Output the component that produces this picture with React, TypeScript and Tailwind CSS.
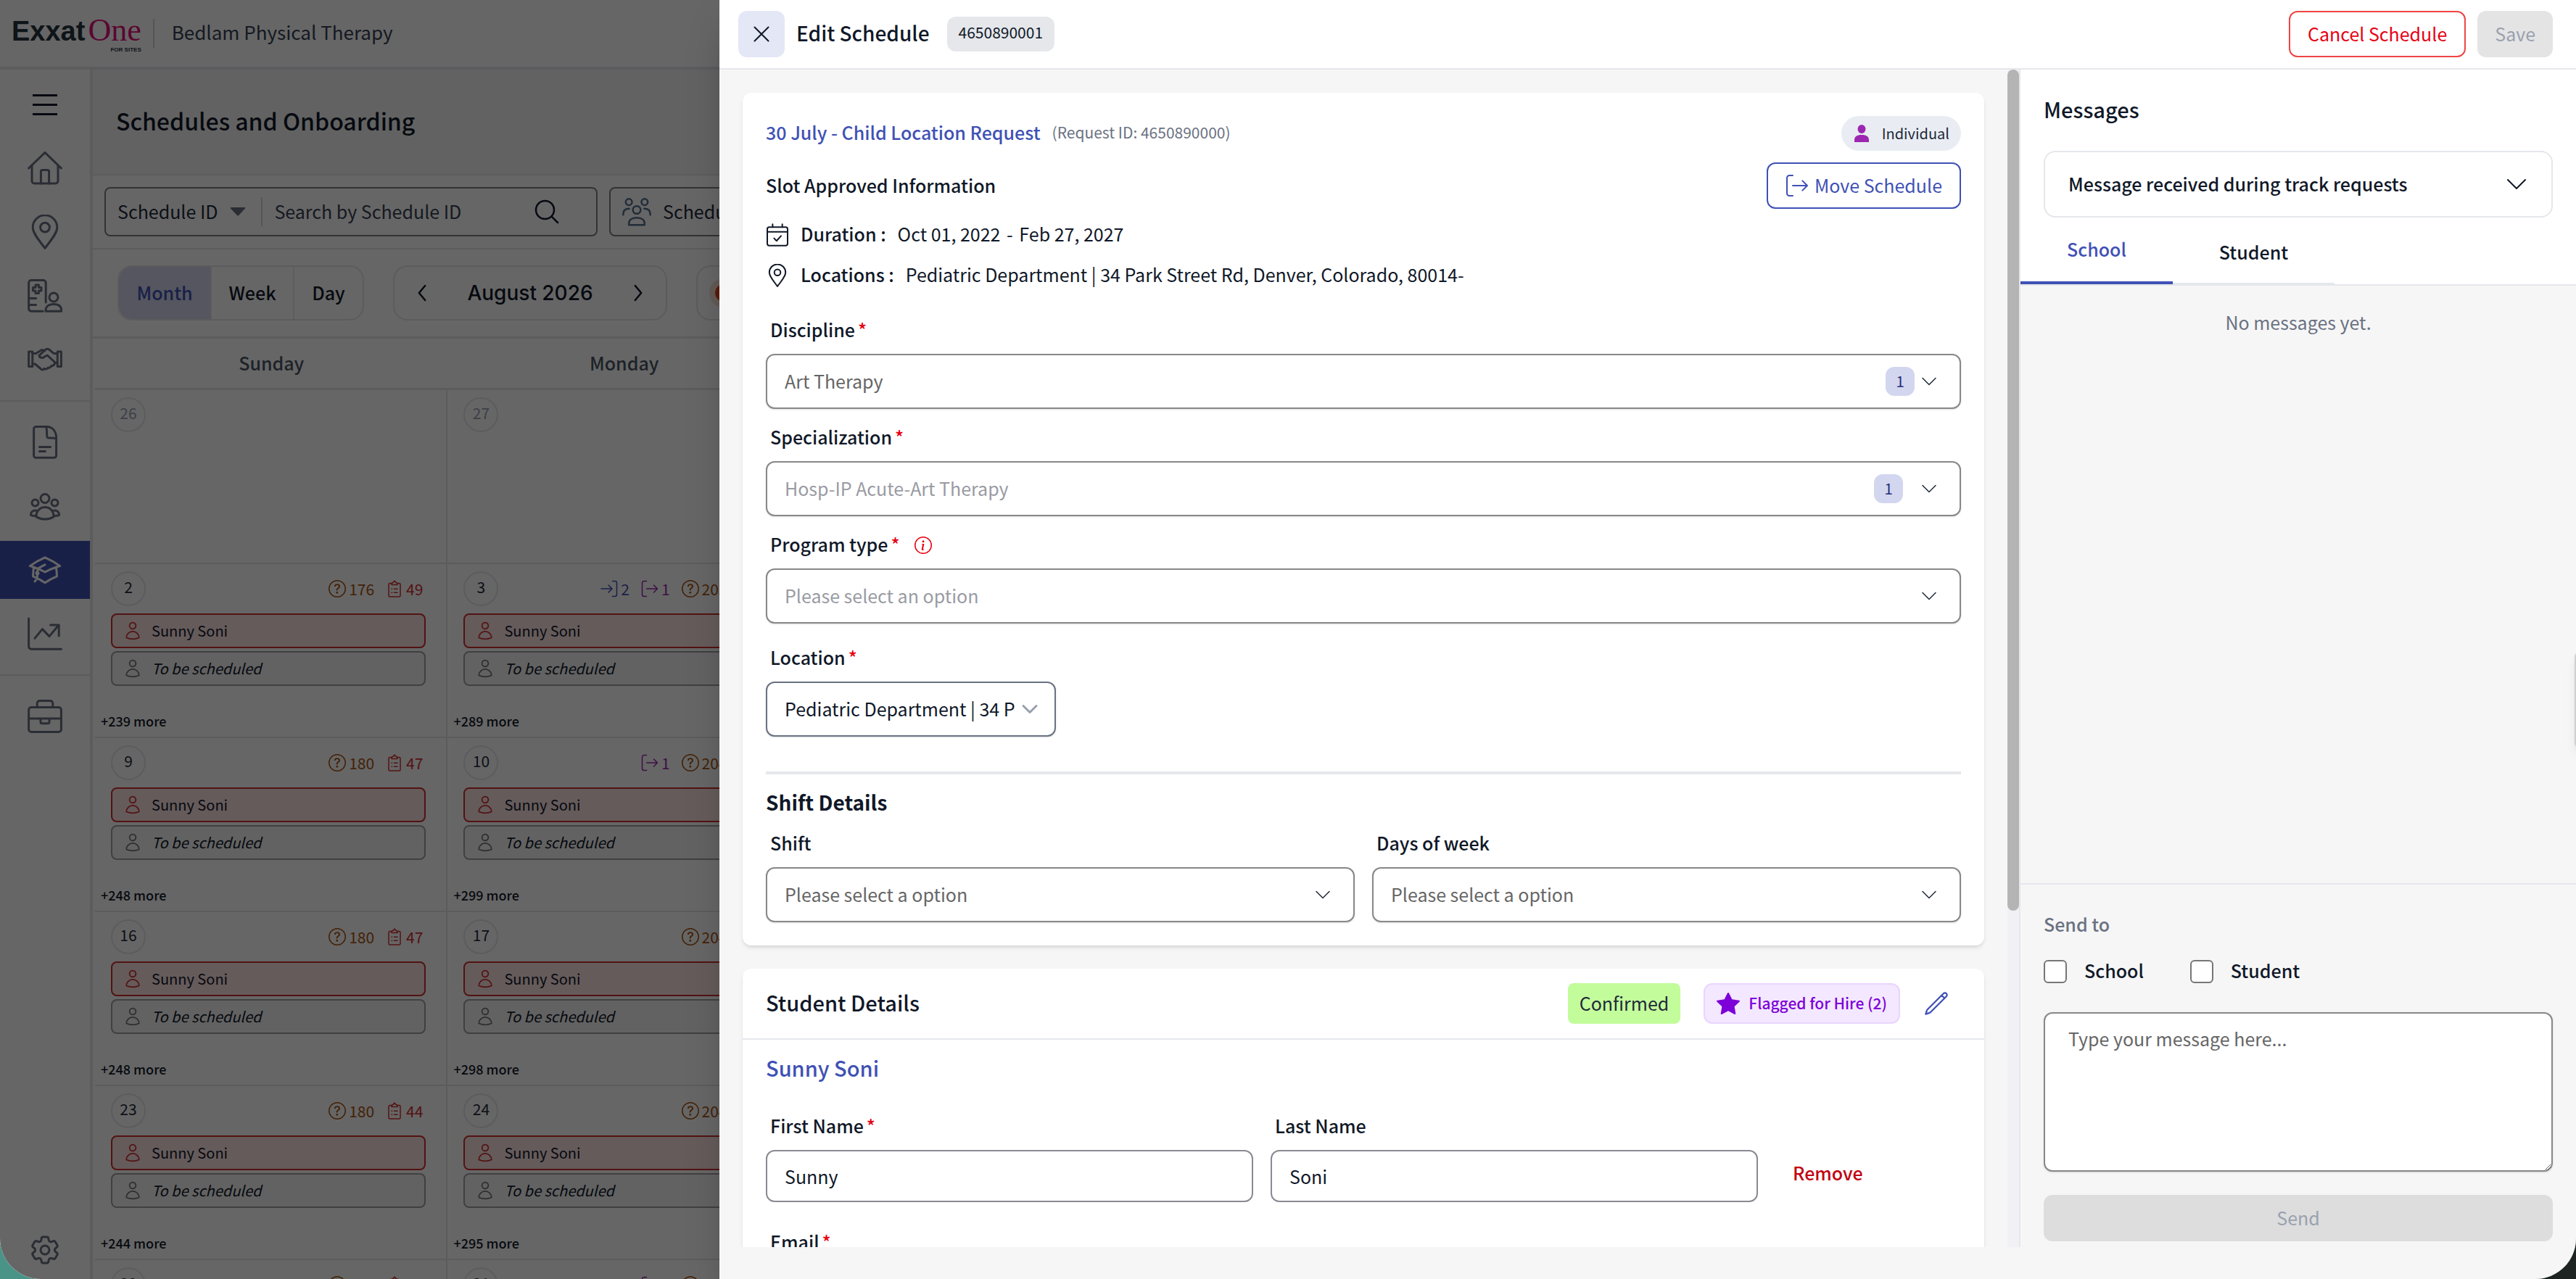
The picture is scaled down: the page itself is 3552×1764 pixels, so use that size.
import { useState } from "react";
import {
  HiOutlineAcademicCap,
  HiOutlineCog6Tooth,
  HiOutlineMagnifyingGlass,
  HiOutlinePencil,
  HiOutlineUser,
  HiOutlineUserGroup,
} from "react-icons/hi2";
import { BsChevronDown, BsInfoCircle, BsQuestionCircle, BsStarFill } from "react-icons/bs";

interface DayStats {
  moveIn?: number;
  moveOut?: number;
  pending: number;
  tasks?: number;
}

interface Day {
  date: number;
  muted?: boolean;
  more?: number;
  stats?: DayStats;
}

const WEEKS: Day[][] = [
  [{ date: 26, muted: true }, { date: 27, muted: true }],
  [
    { date: 2, more: 239, stats: { pending: 176, tasks: 49 } },
    { date: 3, more: 289, stats: { moveIn: 2, moveOut: 1, pending: 203, tasks: 52 } },
  ],
  [
    { date: 9, more: 248, stats: { pending: 180, tasks: 47 } },
    { date: 10, more: 299, stats: { moveOut: 1, pending: 204, tasks: 52 } },
  ],
  [
    { date: 16, more: 248, stats: { pending: 180, tasks: 47 } },
    { date: 17, more: 298, stats: { pending: 204, tasks: 52 } },
  ],
  [
    { date: 23, more: 244, stats: { pending: 180, tasks: 44 } },
    { date: 24, more: 295, stats: { pending: 204, tasks: 52 } },
  ],
  [
    { date: 30, more: 240, stats: { pending: 180, tasks: 44 } },
    { date: 31, more: 290, stats: { moveOut: 1, pending: 204, tasks: 52 } },
  ],
];

/* ---------- icons ---------- */

interface IconProps {
  className?: string;
  children?: React.ReactNode;
}

function Icon({ className, children }: IconProps) {
  return (
    <svg
      viewBox="0 0 24 24"
      fill="none"
      stroke="currentColor"
      strokeWidth="1.5"
      strokeLinecap="round"
      strokeLinejoin="round"
      aria-hidden="true"
      className={className}
    >
      {children}
    </svg>
  );
}

function HomeIcon({ className }: IconProps) {
  return (
    <Icon className={className}>
      <path d="M0.8 12 12 1.2 23.2 12" />
      <path d="M3 10v10.8a1.7 1.7 0 0 0 1.7 1.7h14.6a1.7 1.7 0 0 0 1.7-1.7V10" />
      <path d="M9.2 22.5v-8.2a1 1 0 0 1 1-1h3.6a1 1 0 0 1 1 1v8.2" />
    </Icon>
  );
}

function PinIcon({ className }: IconProps) {
  return (
    <Icon className={className}>
      <path d="M12 23.2C8.600 18.400 3.600 13.200 3.600 8.800a8.400 8.400 0 0 1 16.800 0c0 4.400-5 9.600-8.400 14.400Z" />
      <circle cx="12" cy="8.800" r="3.200" />
    </Icon>
  );
}

function ClinicIcon({ className }: IconProps) {
  return (
    <Icon className={className}>
      <path d="M12.600 16.500V3A1.800 1.800 0 0 0 10.800 1.200H2.600A1.800 1.800 0 0 0 .8 3v17.800a1.800 1.800 0 0 0 1.800 1.800h8M.8 13.800h5M.8 18.200h5" />
      <path d="M5.500 4.500h2.200v1.800h1.800v2.200H7.700v1.800H5.500V8.500H3.700V6.300h1.800Z" />
      <circle cx="18" cy="13" r="3" />
      <path d="M12.500 22.600v-.6c0-2.600 2-4.200 5.500-4.200s5.300 1.600 5.300 4.200v.6Z" />
    </Icon>
  );
}

function HandshakeIcon({ className }: IconProps) {
  return (
    <Icon className={className}>
      <path d="M.8 6.500h2.600v10.300H.8ZM20.600 6.500h2.600v10.300h-2.600Z" />
      <path d="M3.400 7.800h2.400l4-2.600 2 .8M20.600 7.800h-2.400l-3.400-2.800c-.8-.5-1.600-.5-2.400 0L8 9.200c.4 1.800 2.600 2 4 .6l1.600-.8 5 4.600" />
      <path d="M3.400 15h1.800l4.200 3.600c.8.600 1.700.4 2.100-.4 1 .6 2.200.3 2.600-.7 1 .3 2-.2 2.200-1.200 1.200.1 2.100-.6 2.300-1.700l1.900-.6" />
    </Icon>
  );
}

function DocIcon({ className }: IconProps) {
  return (
    <Icon className={className}>
      <path d="M4.300 2.800a1.500 1.500 0 0 1 1.500-1.500h7.400c4 0 6.600 3.200 6.600 7.500v12.300a1.500 1.500 0 0 1-1.500 1.500H5.800a1.500 1.500 0 0 1-1.500-1.500Z" />
      <path d="M12.800 1.400c.8 1.600.2 6.800.9 7.400s4.700-.3 6 .8M8.200 15.300h7.600M8.200 18.300h4" />
    </Icon>
  );
}

function ChartIcon({ className }: IconProps) {
  return (
    <Icon className={className}>
      <path d="M.8 1.500v19.300a1.800 1.800 0 0 0 1.800 1.800h20.600" />
      <path d="m5 15.200 5.200-6.400 4.800 5L21.500 6M15.800 6h5.800v7.500" />
    </Icon>
  );
}

function BriefcaseIcon({ className }: IconProps) {
  return (
    <Icon className={className}>
      <rect x=".8" y="5.800" width="22.400" height="17" rx="1.800" />
      <path d="M6.600 5.800V3a1.800 1.800 0 0 1 1.800-1.800h7.200A1.800 1.800 0 0 1 17.400 3v2.800M.8 13.500h22.400M9 13.500v2.400a1 1 0 0 0 1 1h4a1 1 0 0 0 1-1v-2.400" />
    </Icon>
  );
}

function PeopleIcon({ className }: IconProps) {
  return (
    <Icon className={className}>
      <circle cx="5.500" cy="4" r="2.600" />
      <circle cx="18.500" cy="4" r="2.600" />
      <circle cx="12" cy="10.500" r="3.200" />
      <path d="M.8 14.500v-.6c0-2.700 1.700-4.400 5-4.400M23.200 14.500v-.6c0-2.700-1.700-4.400-5-4.400M5.500 23v-1.200c0-2.800 2.300-4.800 6.500-4.800s6.500 2 6.500 4.800V23Z" />
    </Icon>
  );
}

function ClipboardIcon({ className }: IconProps) {
  return (
    <Icon className={className}>
      <path d="M8 4.500H5.500A1.500 1.500 0 0 0 4 6v15.500A1.500 1.500 0 0 0 5.500 23h13a1.500 1.500 0 0 0 1.500-1.500V6a1.500 1.500 0 0 0-1.500-1.500H16" />
      <path d="M8 6.500v-2L10.500 3 12 1l1.500 2L16 4.500v2ZM8 12.200h.6M11.500 12.200H16M8 17.200h.6M11.500 17.200H16" />
    </Icon>
  );
}

function MoveOutIcon({ className }: IconProps) {
  return (
    <Icon className={className}>
      <path d="M7.500 1.500H4A2.500 2.500 0 0 0 1.500 4v16A2.500 2.500 0 0 0 4 22.500h3.500M7.500 12h15M17.500 7l5 5-5 5" />
    </Icon>
  );
}

function MoveInIcon({ className }: IconProps) {
  return (
    <Icon className={className}>
      <path d="M16.500 1.500H20A2.500 2.500 0 0 1 22.500 4v16a2.500 2.500 0 0 1-2.500 2.500h-3.500M1 12h15M11 7l5 5-5 5" />
    </Icon>
  );
}

function CalendarIcon({ className }: IconProps) {
  return (
    <Icon className={className}>
      <rect x="1.500" y="4" width="21" height="19" rx="2" />
      <path d="M1.500 8.800h21M7 1v3M17 1v3M8.500 15.500l2.600 2.700 4.600-5.200" />
    </Icon>
  );
}

/* ---------- page behind the drawer ---------- */

function Logo() {
  return (
    <div className="flex flex-col items-end pt-1">
      <div className="flex items-baseline gap-1 leading-10">
        <span className="font-['Liberation_Sans',Arial,sans-serif] text-[38px] font-bold text-[#24343e]">Exxat</span>
        <span className="font-['Liberation_Serif',serif] text-[44px] text-[#e3117b]">One</span>
      </div>
      <span className="font-['Liberation_Sans',Arial,sans-serif] text-[8px] leading-3 font-bold text-[#24343e]">
        FOR SITES
      </span>
    </div>
  );
}

const NAV_TOP = [
  { label: "Home", icon: <HomeIcon className="size-12" /> },
  { label: "Locations", icon: <PinIcon className="size-12" /> },
  { label: "Clinic", icon: <ClinicIcon className="size-12" /> },
  { label: "Partners", icon: <HandshakeIcon className="size-12" /> },
];

const NAV_MIDDLE = [
  { label: "Documents", icon: <DocIcon className="size-12" /> },
  { label: "Groups", icon: <HiOutlineUserGroup className="size-12" /> },
  { label: "Schedules", icon: <HiOutlineAcademicCap className="size-12" />, active: true },
  { label: "Reports", icon: <ChartIcon className="size-12" /> },
];

function NavItem({ label, icon, active }: { label: string; icon: React.ReactNode; active?: boolean }) {
  return (
    <a
      href="#"
      aria-label={label}
      className={
        active
          ? "flex h-20 items-center justify-center bg-[#3f51b5] text-white"
          : "flex h-20 items-center justify-center text-gray-500"
      }
    >
      {icon}
    </a>
  );
}

function Sidebar() {
  return (
    <nav className="flex w-32 shrink-0 flex-col border-r-4 border-gray-200 bg-white">
      <button type="button" aria-label="Menu" className="flex h-24 flex-col items-center justify-center gap-[10px]">
        <span className="h-[3px] w-[34px] bg-gray-900" />
        <span className="h-[3px] w-[34px] bg-gray-900" />
        <span className="h-[3px] w-[34px] bg-gray-900" />
      </button>
      <div className="flex flex-col gap-2">
        {NAV_TOP.map((n) => <NavItem key={n.label} {...n} />)}
      </div>
      <hr className="my-4 border-t-2 border-gray-200" />
      <div className="flex flex-col gap-2">
        {NAV_MIDDLE.map((n) => <NavItem key={n.label} {...n} />)}
      </div>
      <hr className="my-4 border-t-2 border-gray-200" />
      <NavItem label="Jobs" icon={<BriefcaseIcon className="size-12" />} />
      <div className="mt-auto">
        <NavItem label="Settings" icon={<HiOutlineCog6Tooth className="size-12" />} />
      </div>
    </nav>
  );
}

function Stats({ stats }: { stats: DayStats }) {
  return (
    <div className="flex items-center gap-4 pr-1 text-[21px] leading-8">
      {stats.moveIn && (
        <span className="flex items-center gap-1 text-[#3f51b5]"><MoveInIcon className="size-6" />{stats.moveIn}</span>
      )}
      {stats.moveOut && (
        <span className="flex items-center gap-1 text-[#9c27b0]"><MoveOutIcon className="size-6" />{stats.moveOut}</span>
      )}
      <span className="flex items-center gap-1 text-[#a8530f]"><BsQuestionCircle className="size-6" />{stats.pending}</span>
      {stats.tasks && (
        <span className="flex items-center gap-1 text-[#d32f2f]"><ClipboardIcon className="size-6" />{stats.tasks}</span>
      )}
    </div>
  );
}

function DayCell({ day }: { day: Day }) {
  return (
    <td className="h-[240px] border-r-2 border-b-2 border-gray-200 p-0 align-top">
      <div className="flex flex-col pt-[10px] pr-7 pl-[22px]">
        <div className="flex items-center justify-between">
          <span
            className={
              day.muted
                ? "flex size-12 items-center justify-center rounded-full border-2 border-gray-200 pb-1 text-[21px] text-gray-400"
                : "flex size-12 items-center justify-center rounded-full border-2 border-gray-200 pb-1 text-[21px] text-gray-800"
            }
          >
            {day.date}
          </span>
          {day.stats && <Stats stats={day.stats} />}
        </div>
        {day.more && (
          <div className="mt-[10px] flex flex-col gap-1 text-[20px] text-gray-900">
            <div className="flex h-12 items-center gap-3 rounded-lg border-2 border-[#d32f2f] bg-[#fde3e3] pl-[14px]">
              <HiOutlineUser className="size-7 text-[#d32f2f]" />
              Sunny Soni
            </div>
            <div className="flex h-12 items-center gap-3 rounded-lg border-2 border-neutral-400 bg-neutral-100 pl-[14px]">
              <HiOutlineUser className="size-7 text-neutral-500" />
              <em>To be scheduled</em>
            </div>
          </div>
        )}
      </div>
      {day.more && (
        <p className="mt-8 pl-2 text-[18px] leading-8 font-medium text-gray-900">+{day.more} more</p>
      )}
    </td>
  );
}

function SchedulesPage() {
  return (
    <div className="flex h-full flex-col bg-white">
      <header className="flex h-24 shrink-0 items-center border-b-4 border-gray-200 pl-4">
        <Logo />
        <span className="ml-4 h-10 w-[2px] bg-gray-300" />
        <span className="ml-6 pb-1 text-[26px] leading-8 text-gray-700">Bedlam Physical Therapy</span>
      </header>
      <div className="flex min-h-0 flex-1">
        <Sidebar />
        <main className="flex min-w-0 flex-1 flex-col">
          <div className="flex h-[146px] shrink-0 items-center border-b-2 border-gray-200 bg-[#f6f6f6] pl-8">
            <h1 className="pb-1 text-[32px] leading-9 font-medium text-gray-900">Schedules and Onboarding</h1>
          </div>
          <div className="flex h-[102px] shrink-0 items-center gap-4 border-b-2 border-gray-200 pl-4">
            <div className="flex h-[68px] w-[680px] shrink-0 items-center rounded-lg border-2 border-[#808080] px-4 text-[25px] text-gray-800">
              <button type="button" className="flex items-center gap-4">
                Schedule ID
                <svg viewBox="0 0 24 14" className="h-3 w-6 fill-gray-500" aria-hidden="true">
                  <path d="M1 0h22a1 1 0 0 1 .7 1.700L13 13a1.500 1.500 0 0 1-2 0L.3 1.700A1 1 0 0 1 1 0Z" />
                </svg>
              </button>
              <span className="ml-5 h-10 w-[2px] bg-gray-300" />
              <input
                aria-label="Search by Schedule ID"
                placeholder="Search by Schedule ID"
                className="ml-4 min-w-0 flex-1 placeholder:text-gray-700 focus:outline-none"
              />
              <HiOutlineMagnifyingGlass className="mr-8 size-10 text-gray-900" />
            </div>
            <button
              type="button"
              className="flex h-[68px] w-[480px] items-center gap-4 rounded-lg border-2 border-[#808080] px-4 text-[25px] text-gray-800"
            >
              <PeopleIcon className="size-10 text-[#56708f]" />
              Schedules
            </button>
          </div>
          <div className="flex h-[123px] shrink-0 items-center gap-10 border-b-[3px] border-gray-200 pl-[34px] text-[25px]">
            <div className="flex h-[76px] overflow-hidden rounded-[20px] border-2 border-gray-200 font-medium text-gray-900">
              <button type="button" className="w-[126px] bg-[#d4d6ee] text-[#3f51b5]">Month</button>
              <button type="button" className="w-[116px] border-x-2 border-gray-200">Week</button>
              <button type="button" className="w-[94px]">Day</button>
            </div>
            <div className="flex h-[76px] w-[378px] items-center justify-between rounded-[20px] border-2 border-gray-200 px-7 text-gray-900">
              <button type="button" aria-label="Previous month">
                <Icon className="h-6 w-5"><path d="M17 0 7 12l10 12" strokeWidth="3" /></Icon>
              </button>
              <span className="font-['Inter',sans-serif] text-[28px] font-medium">August 2026</span>
              <button type="button" aria-label="Next month">
                <Icon className="h-6 w-5"><path d="m7 0 10 12L7 24" strokeWidth="3" /></Icon>
              </button>
            </div>
            <div className="flex h-[76px] w-[378px] items-center rounded-[20px] border-2 border-gray-200 pl-4">
              <span className="flex size-10 items-center justify-center rounded-full bg-[#fbe0d6]">
                <span className="size-6 rounded-full bg-[#e0471b]" />
              </span>
            </div>
          </div>
          <div className="min-h-0 flex-1 overflow-hidden pr-4 pl-[3px]">
            <table className="w-full table-fixed border-separate border-spacing-0">
              <thead>
                <tr className="text-[25px] text-gray-600">
                  <th className="h-[71px] w-1/7 border-b-[3px] border-gray-200 font-medium">Sunday</th>
                  <th className="w-1/7 border-b-[3px] border-gray-200 font-medium">Monday</th>
                  <th colSpan={5} className="border-b-[3px] border-gray-200" />
                </tr>
              </thead>
              <tbody>
                {WEEKS.map((week) => (
                  <tr key={week[0].date}>
                    {week.map((day) => <DayCell key={day.date} day={day} />)}
                    <td colSpan={5} className="border-b-2 border-gray-200" />
                  </tr>
                ))}
              </tbody>
            </table>
          </div>
        </main>
      </div>
    </div>
  );
}

/* ---------- drawer ---------- */

interface SelectFieldProps {
  id: string;
  label: string;
  value: string;
  required?: boolean;
  info?: boolean;
  count?: number;
  tone?: "placeholder" | "disabled" | "filled";
  compact?: boolean;
  wideGap?: boolean;
}

const TONES = {
  placeholder: "border-[#888888] text-[#666666]",
  disabled: "border-[#888888] text-[#999ba3]",
  filled: "border-gray-500 text-gray-900",
};

function FieldLabel({ id, label, required }: { id: string; label: string; required?: boolean }) {
  return (
    <label htmlFor={id} className="pb-1 pl-[6px] text-[25px] leading-9 font-medium text-gray-900">
      {label}
      {required && <span className="ml-1 text-[#e60012]">*</span>}
    </label>
  );
}

function SelectField({ id, label, value, required, info, count, tone = "placeholder", compact, wideGap }: SelectFieldProps) {
  return (
    <div className={compact ? "flex w-[400px] flex-col gap-3" : "flex min-w-0 flex-1 flex-col gap-3"}>
      <div className="flex items-center gap-5">
        <FieldLabel id={id} label={label} required={required} />
        {info && <BsInfoCircle className="size-6 text-[#e60012]" />}
      </div>
      <div className="relative">
        <select
          id={id}
          className={`h-[76px] w-full appearance-none rounded-xl border-2 bg-white pr-12 pl-6 text-[25px] shadow-sm ${TONES[tone]}`}
        >
          <option>{value}</option>
        </select>
        <div
          className={`pointer-events-none absolute inset-y-0 flex items-center ${compact ? "right-6" : "right-8"} ${wideGap ? "gap-6" : "gap-2"}`}
        >
          {count && (
            <span className="flex size-10 items-center justify-center rounded-xl bg-[#d3d6ef] text-[21px] text-[#28307a]">
              {count}
            </span>
          )}
          <BsChevronDown className={tone === "filled" ? "size-6 stroke-1 text-gray-400" : "size-6 text-gray-800"} />
        </div>
      </div>
    </div>
  );
}

function TextField({ id, label, value, required }: { id: string; label: string; value: string; required?: boolean }) {
  return (
    <div className="flex w-[672px] flex-col gap-3">
      <FieldLabel id={id} label={label} required={required} />
      <input
        id={id}
        defaultValue={value}
        className="h-[72px] w-full rounded-xl border-2 border-[#8a8a92] px-6 text-[25px] text-gray-900"
      />
    </div>
  );
}

function ScheduleCard() {
  return (
    <section className="flex flex-col rounded-xl bg-white p-8 shadow-md">
      <div className="flex h-12 items-center gap-4">
        <a href="#" className="pb-1 text-[25px] leading-9 font-medium text-[#3f51b5]">30 July - Child Location Request</a>
        <span className="pb-1 text-[21px] leading-9 text-gray-500">(Request ID: 4650890000)</span>
        <span className="ml-auto flex h-12 items-center gap-4 rounded-full bg-[#e9edf3] px-4 text-[20px] text-gray-800">
          <svg viewBox="0 0 24 24" className="size-6 fill-[#9c27b0]" aria-hidden="true">
            <ellipse cx="12" cy="6" rx="5.500" ry="6" />
            <path d="M2 24v-3c0-4.500 3.500-7 10-7s10 2.500 10 7v3Z" />
          </svg>
          Individual
        </span>
      </div>
      <div className="mt-4 flex items-center justify-between">
        <h2 className="text-[25px] font-medium text-gray-900">Slot Approved Information</h2>
        <button
          type="button"
          className="flex h-16 items-center gap-2 rounded-xl border-2 border-[#3f51b5] px-6 text-[25px] text-[#3f51b5]"
        >
          <MoveOutIcon className="size-8" />
          Move Schedule
        </button>
      </div>
      <dl className="mt-4 flex flex-col gap-4 text-[25px] leading-9 text-gray-900">
        <div className="flex items-center gap-4">
          <CalendarIcon className="size-8" />
          <dt className="pb-1 font-medium">Duration :</dt>
          <dd className="pb-1">
            Oct 01, 2022 <span className="mx-[3px]">-</span> Feb 27, 2027
          </dd>
        </div>
        <div className="flex items-center gap-4">
          <PinIcon className="size-8" />
          <dt className="pb-1 font-medium">Locations :</dt>
          <dd className="pb-1">Pediatric Department | 34 Park Street Rd, Denver, Colorado, 80014-</dd>
        </div>
      </dl>
      <div className="mt-9 flex flex-col gap-5">
        <SelectField id="discipline" label="Discipline" value="Art Therapy" required count={1} />
        <SelectField id="specialization" label="Specialization" value="Hosp-IP Acute-Art Therapy" required count={1} tone="disabled" wideGap />
        <SelectField id="program-type" label="Program type" value="Please select an option" required info tone="disabled" />
      </div>
      <div className="mt-7">
        <SelectField id="location" label="Location" value="Pediatric Department | 34 P" required tone="filled" compact />
      </div>
      <hr className="mt-12 border-t-4 border-gray-200" />
      <h2 className="mt-5 pb-1 text-[28px] leading-9 font-bold text-gray-900">Shift Details</h2>
      <div className="mt-4 flex gap-6">
        <SelectField id="shift" label="Shift" value="Please select a option" />
        <SelectField id="days" label="Days of week" value="Please select a option" />
      </div>
    </section>
  );
}

function StudentCard() {
  return (
    <section className="flex shrink-0 flex-col rounded-xl bg-white shadow-md">
      <div className="flex h-[98px] items-center gap-8 border-b-2 border-gray-200 pr-12 pl-8">
        <h2 className="mr-auto pb-1 text-[29px] leading-9 font-medium text-gray-900">Student Details</h2>
        <span className="flex h-14 items-center rounded-lg bg-[#c3fc9b] px-4 text-[25px] text-gray-800">Confirmed</span>
        <span className="flex h-14 items-center gap-3 rounded-xl border-2 border-[#e9d5ff] bg-[#f3e8ff] px-4 text-[21px] font-medium text-[#7e00d9]">
          <BsStarFill className="size-8" />
          Flagged for Hire (2)
        </span>
        <button type="button" aria-label="Edit student" className="text-[#3f51b5]">
          <HiOutlinePencil className="size-9" />
        </button>
      </div>
      <div className="flex flex-col px-8 pt-5 pb-8">
        <h3 className="pb-1 text-[29px] leading-9 font-medium text-[#3f51b5]">Sunny Soni</h3>
        <div className="mt-10 flex items-end gap-6">
          <TextField id="first-name" label="First Name" value="Sunny" required />
          <TextField id="last-name" label="Last Name" value="Soni" />
          <button type="button" className="h-20 px-6 text-[25px] font-medium text-[#c20010]">Remove</button>
        </div>
        <div className="mt-9">
          <TextField id="email" label="Email" value="" required />
        </div>
      </div>
    </section>
  );
}

function Messages() {
  const [tab, setTab] = useState<"School" | "Student">("School");
  const [message, setMessage] = useState("");

  return (
    <aside className="flex w-[30%] shrink-0 flex-col border-l-2 border-gray-200">
      <div className="bg-white px-8 pt-9">
        <h2 className="pb-1 text-[29px] leading-9 font-medium text-gray-900">Messages</h2>
        <button
          type="button"
          className="mt-9 flex h-[92px] w-full items-center justify-between rounded-2xl border-2 border-gray-200 px-8 text-[25px] font-medium text-gray-900"
        >
          Message received during track requests
          <BsChevronDown className="size-8" />
        </button>
      </div>
      <div className="flex h-[94px] items-stretch border-b-2 border-gray-200 bg-white">
        {(["School", "Student"] as const).map((name) => (
          <button
            key={name}
            type="button"
            onClick={() => setTab(name)}
            className={
              tab === name
                ? "border-b-4 border-[#3f51b5] px-16 text-[25px] font-medium text-[#3f51b5]"
                : "self-end border-b-2 border-gray-200 px-16 pt-6 pb-6 text-[25px] font-medium text-gray-900"
            }
          >
            {name}
          </button>
        ))}
      </div>
      <p className="flex-1 pt-8 text-center text-[25px] leading-9 text-gray-500">No messages yet.</p>
      <div className="flex flex-col border-t-2 border-gray-200 px-8 pt-9 pb-2">
        <p className="pb-1 text-[25px] leading-9 font-medium text-gray-500">Send to</p>
        <div className="mt-6 flex gap-16 text-[25px] leading-9 font-medium text-gray-900">
          {["School", "Student"].map((name) => (
            <label key={name} className="flex h-10 items-center gap-6">
              <input type="checkbox" className="size-8 appearance-none rounded-md border-2 border-[#767676] bg-white checked:bg-[#3f51b5]" />
              <span className="pb-1">{name}</span>
            </label>
          ))}
        </div>
        <textarea
          aria-label="Message"
          value={message}
          onChange={(e) => setMessage(e.target.value)}
          placeholder="Type your message here..."
          className="mt-9 h-[220px] w-full rounded-xl border-2 border-[#888888] bg-white px-8 py-4 text-[25px] leading-9 shadow-sm placeholder:text-[#666666]"
        />
        <button type="button" disabled className="mt-8 h-16 rounded-xl bg-[#dddddd] text-[25px] text-gray-400">
          Send
        </button>
      </div>
    </aside>
  );
}

function EditScheduleDrawer() {
  return (
    <div
      role="dialog"
      aria-labelledby="drawer-title"
      className="absolute inset-y-0 right-0 flex w-full max-w-[2560px] flex-col bg-[#f6f6f6] shadow-2xl"
    >
      <header className="flex h-24 shrink-0 items-center border-b-2 border-gray-200 bg-white pr-8 pl-[26px]">
        <button type="button" aria-label="Close" className="flex size-16 items-center justify-center rounded-xl bg-[#e4e7f6] text-gray-900">
          <Icon className="size-6"><path d="m2.500 2.500 19 19M21.500 2.500l-19 19" strokeWidth="2" /></Icon>
        </button>
        <h1 id="drawer-title" className="ml-4 pb-1 text-[28px] leading-9 font-medium text-gray-900">Edit Schedule</h1>
        <span className="ml-6 flex h-12 items-center rounded-xl bg-gray-200 px-4 pb-1 text-[21px] text-gray-900">4650890001</span>
        <button type="button" className="ml-auto h-16 rounded-xl border-2 border-[#ef4444] px-6 text-[25px] text-[#e60012]">
          Cancel Schedule
        </button>
        <button type="button" disabled className="ml-4 h-16 rounded-xl bg-[#e4e4e4] px-6 text-[25px] text-gray-400">
          Save
        </button>
      </header>
      <div className="flex min-h-0 flex-1">
        <div className="flex min-w-0 flex-1 flex-col gap-8 overflow-hidden px-8 pt-8">
          <ScheduleCard />
          <StudentCard />
        </div>
        <div aria-hidden="true" className="w-4 shrink-0 bg-[#f1f0f4]">
          <div className="h-5/7 rounded-full bg-[#b4b4b4]" />
        </div>
        <Messages />
      </div>
      <div className="h-11 shrink-0" />
      {/* side handle peeking in from the window edge */}
      <div className="absolute top-[898px] -right-4 h-[134px] w-[18px] rounded-lg bg-[#d0d0d0] shadow-lg" />
    </div>
  );
}

export default function App() {
  return (
    <div className="h-screen bg-[linear-gradient(90deg,#4a9487_50%,#1d2422_50%)] font-['Noto_Sans_CJK_SC','Source_Sans_3','Noto_Sans',sans-serif]">
      <div className="relative h-full overflow-hidden rounded-b-[56px]">
        <SchedulesPage />
        <div className="absolute inset-0 bg-black/60" />
        <EditScheduleDrawer />
      </div>
    </div>
  );
}
